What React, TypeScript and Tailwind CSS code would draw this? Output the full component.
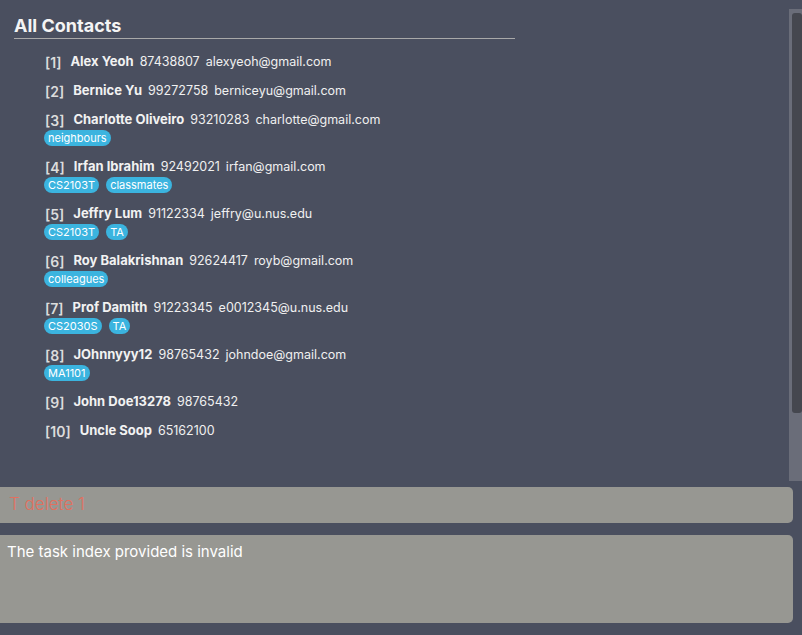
type Contact = {
  name: string;
  phone: string;
  email?: string;
  tags?: string[];
};

const contacts: Contact[] = [
  { name: "Alex Yeoh", phone: "87438807", email: "alexyeoh@gmail.com" },
  { name: "Bernice Yu", phone: "99272758", email: "berniceyu@gmail.com" },
  { name: "Charlotte Oliveiro", phone: "93210283", email: "charlotte@gmail.com", tags: ["neighbours"] },
  { name: "Irfan Ibrahim", phone: "92492021", email: "irfan@gmail.com", tags: ["CS2103T", "classmates"] },
  { name: "Jeffry Lum", phone: "91122334", email: "jeffry@u.nus.edu", tags: ["CS2103T", "TA"] },
  { name: "Roy Balakrishnan", phone: "92624417", email: "royb@gmail.com", tags: ["colleagues"] },
  { name: "Prof Damith", phone: "91223345", email: "e0012345@u.nus.edu", tags: ["CS2030S", "TA"] },
  { name: "JOhnnyyy12", phone: "98765432", email: "johndoe@gmail.com", tags: ["MA1101"] },
  { name: "John Doe13278", phone: "98765432" },
  { name: "Uncle Soop", phone: "65162100" },
];

function ContactCard({ c, index }: { c: Contact; index: number }) {
  return (
    <div className="pb-[9px] pl-[45px]">
      <div className="flex h-[20px] items-center whitespace-nowrap">
        <span className="text-[14px] font-semibold text-[#dcdcdc] mr-[9px]">[{index}]</span>
        <span className="text-[13px] font-bold text-[#f2f2f2] mr-[6px]">{c.name}</span>
        <span className="text-[12.5px] text-[#f0f0f0] mr-[6px]">{c.phone}</span>
        {c.email && <span className="text-[12.5px] text-[#f0f0f0]">{c.email}</span>}
      </div>
      {c.tags && (
        <div className="flex h-[18px] items-start gap-[7px] -ml-[1px]">
          {c.tags.map((t) => (
            <span
              key={t}
              className="h-[16px] flex items-center rounded-[8px] bg-[#3bb4df] px-[4px] text-[11px] text-white"
            >
              {t}
            </span>
          ))}
        </div>
      )}
    </div>
  );
}

export default function App() {
  return (
    <div
      className="h-[635px] w-[802px] flex flex-col bg-[#4a4f5f] overflow-hidden"
      style={{ fontFamily: "Inter, 'Liberation Sans', sans-serif" }}
    >
      {/* Contact list + scrollbar */}
      <div className="h-[487px] flex">
        <div className="flex-1">
          <div className="ml-[14px] w-[501px] border-b border-[#a9a9a9] pt-[14px] pb-[1px]">
            <h1 className="text-[18px] leading-[23px] font-bold text-[#f4f4f4]">All Contacts</h1>
          </div>
          <div className="pt-[13px]">
            {contacts.map((c, i) => (
              <ContactCard key={i} c={c} index={i + 1} />
            ))}
          </div>
        </div>
        <div className="w-[13px] mt-[9px] mb-[6px] bg-[#6a6d79] pl-[3px] pt-[4px]">
          <div className="h-[400px] rounded-[3px] bg-[#45474f]" />
        </div>
      </div>

      {/* Command box */}
      <div className="h-[36px] w-[793px] rounded-r-[5px] bg-[#979792] flex items-center pl-[9px]">
        <span className="text-[17px] font-light text-[#e2705f]">T delete 1</span>
      </div>

      {/* Result display */}
      <div className="mt-[12px] h-[88px] w-[793px] rounded-r-[5px] bg-[#979792] px-[7px] pt-[6px]">
        <p className="text-[15px] text-white">The task index provided is invalid</p>
      </div>
    </div>
  );
}
